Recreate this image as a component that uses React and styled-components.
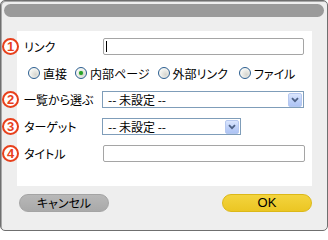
import React from "react";
import styled, { createGlobalStyle } from "styled-components";

const Global = createGlobalStyle`
  html, body { margin: 0; padding: 0; background: #ffffff; }
  body { font-family: "Noto Sans CJK JP", "Noto Sans", sans-serif; font-size: 12px; color: #000; }
  * { box-sizing: border-box; }
`;

const Frame = styled.div`
  width: 328px;
  height: 231px;
  border: 1px solid #6f6f6f;
  border-radius: 5px;
  background: #eeeeee;
  padding: 3px;
  display: flex;
  flex-direction: column;
  box-shadow: inset 1px 1px 0 #a8a8a8;
`;

const TitleBar = styled.div`
  height: 13px;
  border-radius: 7px;
  background: #9a9a9a;
`;

const Panel = styled.div`
  margin: 14px 0 0 13px;
  width: 295px;
  height: 155px;
  background: #ffffff;
  padding-top: 7px;
  display: flex;
  flex-direction: column;
  gap: 10px;
`;

const Row = styled.div`
  display: flex;
  align-items: center;
  height: 17px;
`;

const Badge = styled.span`
  width: 17px;
  height: 17px;
  margin-left: -15px;
  border: 2px solid #e8401c;
  border-radius: 50%;
  background: #fff;
  color: #e8401c;
  font-family: "Liberation Sans", Arial, sans-serif;
  font-weight: bold;
  font-size: 13px;
  line-height: 13px;
  display: flex;
  align-items: center;
  justify-content: center;
  flex-shrink: 0;
`;

const Label = styled.span`
  margin-left: 5px;
  width: 79px;
  flex-shrink: 0;
  font-feature-settings: "palt";
  white-space: nowrap;
  line-height: 17px;
`;

const FieldWrap = styled.div`
  position: relative;
  width: ${p => p.$w}px;
  height: 17px;
  ${p => p.$caret && `
    &::after {
      content: "";
      position: absolute;
      left: 3px;
      top: 3px;
      width: 1px;
      height: 11px;
      background: #000;
    }
  `}
`;

const TextInput = styled.input`
  width: 100%;
  height: 17px;
  margin: 0;
  padding: 0 3px;
  border: 1px solid #a5a5a5;
  border-radius: 2px;
  background: #fff;
  font: inherit;
  outline: none;
`;

const RadioRow = styled.div`
  display: flex;
  align-items: center;
  height: 16px;
  padding-left: 11px;
  font-feature-settings: "palt";
`;

const RadioItem = styled.label`
  display: flex;
  align-items: center;
  gap: 3px;
  margin-right: ${p => p.$mr}px;
  white-space: nowrap;
`;

const RadioDot = styled.span`
  width: 12px;
  height: 12px;
  border-radius: 50%;
  border: 1px solid #2a5d8f;
  background: radial-gradient(circle at 65% 65%, #d6d6d0 0%, #f4f4f0 60%, #ffffff 100%);
  display: flex;
  align-items: center;
  justify-content: center;
  &::after {
    content: "";
    width: 4px;
    height: 4px;
    border-radius: 50%;
    background: ${p => (p.$on ? "#28a028" : "transparent")};
    box-shadow: ${p => (p.$on ? "0 0 1px #5fd05f" : "none")};
  }
`;

const SelectBox = styled.div`
  width: ${p => p.$w}px;
  height: 17px;
  margin-left: -1px;
  border: 1px solid #7f9db9;
  background: #fff;
  display: flex;
  align-items: center;
  justify-content: space-between;
  padding: 0 1px 0 5px;
  line-height: 15px;
  white-space: nowrap;
`;

const DropButton = styled.span`
  width: 14px;
  height: 14px;
  border: 1px solid #b6c8ef;
  border-radius: 2px;
  background: linear-gradient(180deg, #dbe6fd 0%, #bccff8 60%, #aec4f4 100%);
  display: flex;
  align-items: center;
  justify-content: center;
`;

const ButtonRow = styled.div`
  margin-top: 8px;
  display: flex;
  justify-content: space-between;
  padding: 0 12px 0 15px;
`;

const PillButton = styled.button`
  width: 90px;
  height: 18px;
  margin: 0;
  padding: 0;
  border-radius: 9px;
  border: 1px solid ${p => (p.$primary ? "#dcb818" : "#a4a4a4")};
  background: ${p =>
    p.$primary
      ? "linear-gradient(180deg, #f3d43e 0%, #ebc623 100%)"
      : "linear-gradient(180deg, #b8b8b8 0%, #a9a9a9 100%)"};
  color: #000;
  font-family: ${p => (p.$primary ? '"Liberation Sans", Arial, sans-serif' : '"Noto Sans CJK JP", sans-serif')};
  font-size: ${p => (p.$primary ? 13 : 12)}px;
  font-feature-settings: "palt";
  line-height: 16px;
`;

const Chevron = () => (
  <svg width="8" height="6" viewBox="0 0 8 6">
    <path d="M1 1.2 L4 4.2 L7 1.2" fill="none" stroke="#4d6185" strokeWidth="1.8" />
  </svg>
);

const Select = ({ w }) => (
  <SelectBox $w={w}>
    <span>-- 未設定 --</span>
    <DropButton>
      <Chevron />
    </DropButton>
  </SelectBox>
);

const radios = [
  { label: "直接", mr: 8 },
  { label: "内部ページ", mr: 8, checked: true },
  { label: "外部リンク", mr: 11 },
  { label: "ファイル", mr: 0 },
];

export default function App() {
  return (
    <>
      <Global />
      <Frame>
        <TitleBar />
        <Panel>
          <Row>
            <Badge>1</Badge>
            <Label>リンク</Label>
            <FieldWrap $w={201} $caret>
              <TextInput type="text" />
            </FieldWrap>
          </Row>
          <RadioRow>
            {radios.map(r => (
              <RadioItem key={r.label} $mr={r.mr}>
                <RadioDot $on={!!r.checked} />
                <span>{r.label}</span>
              </RadioItem>
            ))}
          </RadioRow>
          <Row>
            <Badge>2</Badge>
            <Label>一覧から選ぶ</Label>
            <Select w={202} />
          </Row>
          <Row>
            <Badge>3</Badge>
            <Label>ターゲット</Label>
            <Select w={139} />
          </Row>
          <Row>
            <Badge>4</Badge>
            <Label>タイトル</Label>
            <FieldWrap $w={202}>
              <TextInput type="text" />
            </FieldWrap>
          </Row>
        </Panel>
        <ButtonRow>
          <PillButton>キャンセル</PillButton>
          <PillButton $primary>OK</PillButton>
        </ButtonRow>
      </Frame>
    </>
  );
}
